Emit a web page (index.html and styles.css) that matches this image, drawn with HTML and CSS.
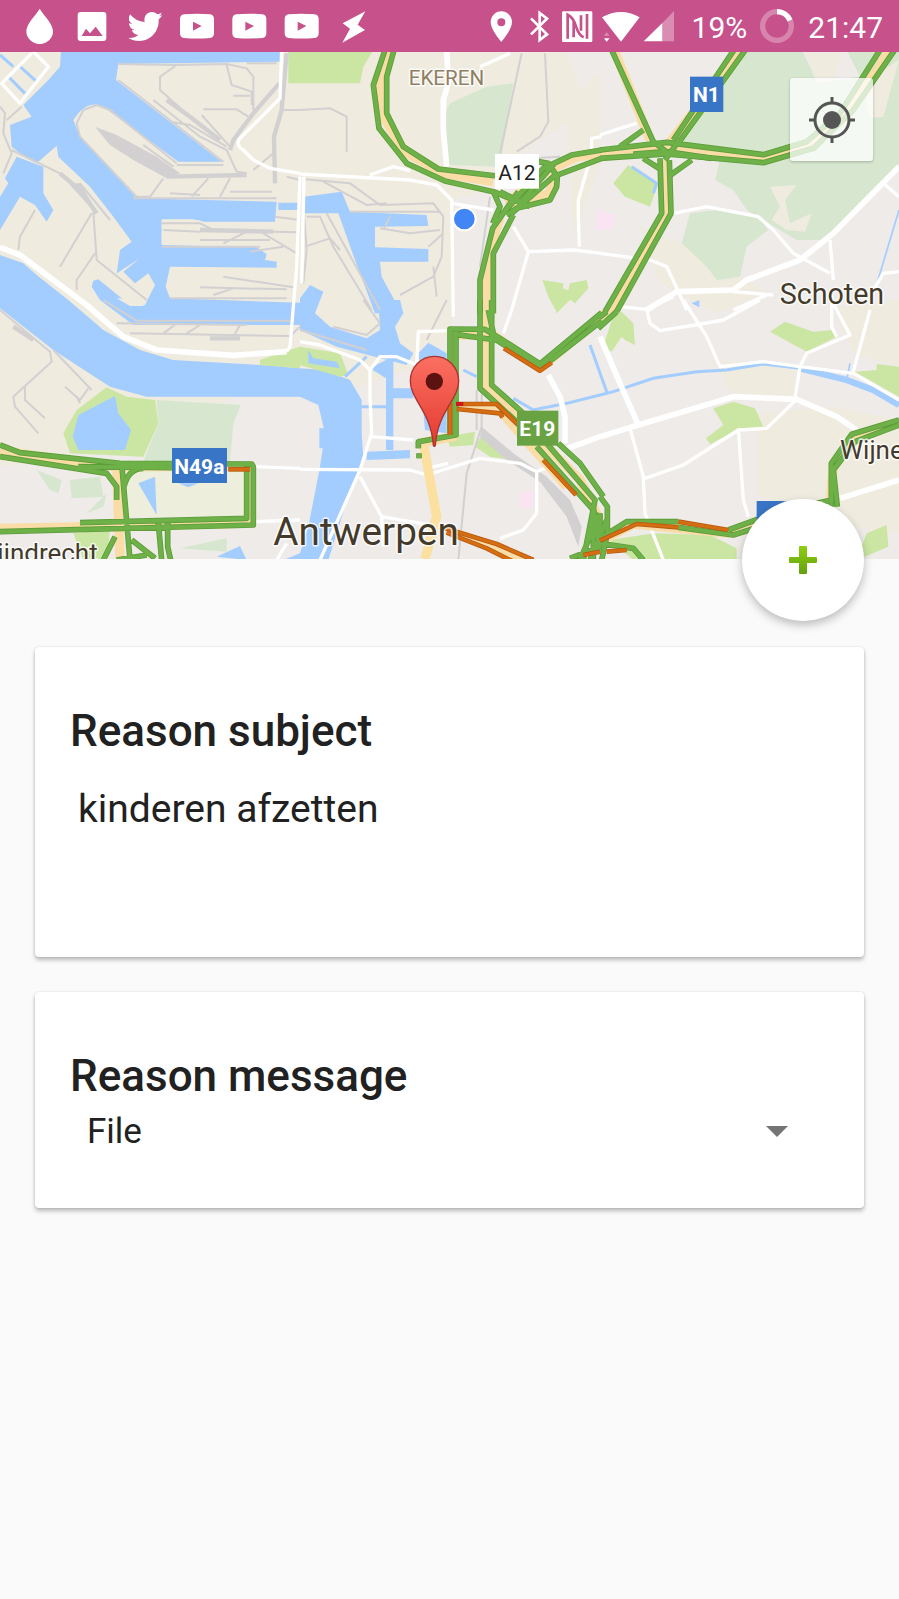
FILE: index.html
```html
<!DOCTYPE html>
<html lang="en">
<head>
<meta charset="utf-8">
<meta name="viewport" content="width=device-width, initial-scale=1">
<title>Reason</title>
<link rel="stylesheet" href="styles.css">
</head>
<body>
<header class="status">
  <div class="status-group">
    <svg class="cell-52" viewBox="42 0 156 156"><path d="M119 26C108 46 79 70 79 94a40 38 0 0 0 80 0C159 70 130 46 119 26Z"/></svg>
    <svg class="cell-52" viewBox="198 0 156 156"><path fill-rule="evenodd" d="M242 36H310a9 9 0 0 1 9 9V114a9 9 0 0 1-9 9H242a9 9 0 0 1-9-9V45a9 9 0 0 1 9-9ZM245 108H308L287 80 270 100 258 86Z"/></svg>
    <svg class="cell-52" viewBox="354 0 156 156"><path d="M487 46q-6 9-11 12c2 36-24 65-58 65-13 0-23-3-33-9q18 1 30-9-15-2-20-15 5 1 9 0-17-5-17-21 5 3 9 3-15-12-6-29 18 22 44 23c-4-18 8-30 22-30q9 0 16 7 7-1 13-5-2 7-8 11 5-1 10-3Z"/></svg>
    <svg class="cell-52" viewBox="510 0 156 156"><path fill-rule="evenodd" d="M552 43Q590 39 630 43 642 45 642 57V100Q642 112 630 114 590 117 552 114 540 112 540 100V57Q540 45 552 43ZM579 65V92L605 78Z"/></svg>
    <svg class="cell-52" viewBox="666 0 156 156"><path fill-rule="evenodd" d="M709 43Q747 39 787 43 799 45 799 57V100Q799 112 787 114 747 117 709 114 697 112 697 100V57Q697 45 709 43ZM736 65V92L762 78Z"/></svg>
    <svg class="cell-52" viewBox="822 0 156 156"><path fill-rule="evenodd" d="M866 43Q904 39 944 43 956 45 956 57V100Q956 112 944 114 904 117 866 114 854 112 854 100V57Q854 45 866 43ZM893 65V92L919 78Z"/></svg>
    <svg class="cell-52" viewBox="978 0 156 156"><path d="M1096 34 1028 70 1050 86 1027 128 1095 90 1073 74Z"/></svg>
  </div>
  <div class="status-group">
    <svg class="cell-40" viewBox="90 0 120 156"><path fill-rule="evenodd" d="M151 34a32 32 0 0 1 32 32C183 88 158 116 151 126 144 116 119 88 119 66A32 32 0 0 1 151 34ZM151 55a12 12 0 1 0 0 24 12 12 0 0 0 0-24Z"/></svg>
    <svg class="cell-36" viewBox="210 0 108 156"><path class="line" d="M240 55 288 103 266 120V39L288 56 240 103"/></svg>
    <svg class="cell-40" viewBox="318 0 120 156"><rect x="333" y="34" width="91" height="92" rx="4"/><path class="line bar" d="M350 116V44Q368 52 376 82 384 106 398 112M368 64V112M408 42V116M390 46V92"/></svg>
    <svg class="cell-44" viewBox="438 0 132 156"><path d="M453 52Q510 20 566 52L510 125Z"/><path d="M459 115H476L467 125Z"/><path class="dim" d="M459 107H476L467 97Z"/></svg>
    <svg class="cell-36" viewBox="570 0 108 156"><path class="dim" d="M669 33V124H634V69Z"/><path d="M634 69V124H578Z"/></svg>
    <span class="battery">19%</span>
    <svg class="ring" viewBox="927 27 102 102"><circle class="dim-line" cx="978" cy="78" r="43"/><path class="ring-line" d="M978 35A43 43 0 0 1 1017 61"/></svg>
    <time>21:47</time>
  </div>
</header>

<main>
<section class="map" aria-label="Map">
<svg class="map-art" viewBox="0 156 2697 1521" preserveAspectRatio="xMidYMid slice">
  <defs>
    <linearGradient id="pinfill" x1="0" y1="0" x2="0" y2="1"><stop offset="0" stop-color="#fb6f62"/><stop offset="1" stop-color="#e33b2e"/></linearGradient>
    <g id="green-roads">
      <g transform="translate(900 150)"><path d="M255 0 220 105 237 235 320 340 435 393 580 425 655 455M282 0 260 80V190L310 290 415 357 590 378M580 425 600 470 578 520M655 425 578 535 540 690V790M640 495 580 610V790M600 500 730 355 815 315 905 300M635 490 760 380 905 325M715 335 745 340 772 380 770 410 750 450 650 475 620 495M600 425 690 470M655 465 765 338"/></g>
      <g transform="translate(1800 150)"><path d="M0 300 200 277 490 314 620 275 720 190 840 0M0 325 200 312 490 338 640 295 760 180 884 0M35 0 160 275M402 0 220 270M436 0 238 275M180 325 185 490 15 785M208 330 213 490 50 785"/><path d="M60 290 130 240M160 275 205 310M130 325 185 360M205 380 275 330M235 275 195 330M100 312 200 305 335 325"/></g>
      <g transform="translate(0 900)"><path d="M0 435 60 458 360 490 755 492 760 500V675L0 695M0 470 320 520 350 560V600M235 500 520 503M740 500V655L240 668M365 490 390 780M372 560Q385 505 430 505M475 670 485 780M503 670V740L512 780M345 710 310 780M395 720 465 775M350 780 440 765"/></g>
      <g transform="translate(900 900)"><path d="M540 0V265L655 370M575 0V255L670 340M450 400V87L555 88 600 115 720 192 905 38M468 95V405L355 425V445M465 103 590 120 722 205 905 62M565 30 580 100M710 440 880 630V780M740 430 885 600 850 780M775 430 840 490 910 590M900 640 840 780M810 775 900 740M357 460V475M880 620 900 760M870 780 920 660"/></g>
      <g transform="translate(1800 900)"><path d="M-5 55 20 35M-5 85 50 35M0 715 80 665H235M235 682 400 705 480 680M385 690 480 655M694 620V490L755 403 897 360M712 620 700 510 765 425 897 375M650 610 695 600M0 590 22 620V700L5 780M0 730 100 745 130 780M0 640V700"/></g>
    </g>
    <g id="slow-roads">
      <g transform="translate(0 900)"><path d="M685 508H750"/></g>
      <g transform="translate(900 900)"><path d="M612 145 720 212 755 188M450 310V405M470 312 590 312 655 375M470 327 600 340 608 352M730 480 828 585M435 685 590 732 700 780M440 698 560 745 640 785M850 765 900 755"/></g>
      <g transform="translate(1800 900)"><path d="M235 665 385 690M0 722 110 672 235 682M20 755 80 750"/></g>
    </g>
  </defs>

  <rect class="port" y="156" width="2697" height="1521"/>
  <path class="city" d="M1355 600 1500 560 1560 370 1640 156H2697V1677H0V1400L400 1340 700 1190H1000L1300 1080 1355 980Z"/>
  <path class="port" d="M0 1170 250 1130 340 1200 190 1300 200 1350 0 1330ZM2270 1240 2500 1220 2697 1260V1600L2400 1560 2270 1480ZM2500 920 2697 900V1100L2560 1060ZM1350 156 1700 156 1760 330 1500 500 1345 500ZM1700 300 1800 220V500L1720 700ZM1920 680 2160 780 2300 880 2150 940 1980 850ZM2130 1080 2380 1100 2400 1190 2200 1180Z"/>

  <!-- parks and woodland -->
  <g transform="translate(0 150)"><path class="park" d="M865 0H1120L1090 50 1080 100H865Z"/></g>
  <g transform="translate(900 150)"><path class="wood" d="M450 160 560 110 640 100 600 350 445 345 435 190Z"/><path class="park" d="M727 690 790 700 785 760 765 778 745 740ZM810 700 860 690 865 715 825 760 800 740Z"/></g>
  <g transform="translate(1800 150)"><path class="wood" d="M425 0H605L635 60 650 100 780 80 740 0H897V340L690 570H590L440 480 400 420 345 390 360 330 240 270ZM270 490 350 480 480 505 505 540 440 590 420 680 350 690 320 650 245 580Z"/><path class="port" d="M510 410 590 405 555 450 570 520 635 490 615 545 560 540 515 510 540 470ZM897 30 850 200 810 205 790 100ZM620 10H720L700 90 650 90Z"/><path class="park" d="M85 345 175 400 150 470 75 440 40 400Z"/><path class="pink" d="M-10 480 45 495 35 540H-10Z"/></g>
  <g transform="translate(0 900)"><path class="park" d="M320 262 380 290 465 300 475 370 430 470 210 460 190 400 230 330ZM780 180 900 140V205L780 195ZM220 700 330 690 320 780H250Z"/><path class="wood" d="M470 300 722 315 700 370 690 485H430L475 370ZM210 540 300 530 310 590 215 595ZM110 510 185 540 175 580 150 570ZM260 640 320 580 310 620ZM540 745 680 715V755Z"/><path class="pale" d="M380 510H740V650H380Z"/></g>
  <g transform="translate(900 900)"><path class="park" d="M440 410 525 395 520 435 450 440ZM525 440 545 405 640 480 570 470ZM745 -50 830 -20 770 40Z"/><path class="pink" d="M655 580 700 568 698 620 665 628Z"/></g>
  <g transform="translate(1800 900)"><path class="park" d="M40 45 65 35 100 70 105 135 75 120 65 110 35 155 10 140ZM510 95 555 65 640 95 700 90 710 110 620 155ZM765 215 830 210V192L897 200V290ZM340 325 400 305 465 325 490 380 415 390 330 432 318 415 370 375ZM30 720 160 700 330 705 410 745V780H100ZM800 700 860 675 865 740 770 780Z"/><path class="water" d="M275 10 298 0V22Z"/></g>

  <!-- docks and river -->
  <g class="water">
    <path transform="translate(0 150)" d="M183 0H845V35L355 42 348 90 665 335H535L310 170Q270 150 235 190L220 210 240 260 410 445 830 455 825 515 610 515 595 510H485V585L770 592 800 612 795 630 830 635V653L510 650 497 710 510 745 900 758V825H400L300 750 275 710 280 692 295 688 390 765 435 765 465 705 445 670 405 700 370 665 418 626 350 670 360 600 395 575 340 500 270 410 175 320 170 287 110 340 80 325 35 290 30 225 95 200 70 165 145 90 180 50ZM50 320 130 350V430L160 480 140 515 105 465 60 440 0 540V440L25 400 15 385ZM835 458H900V480H835Z"/>
    <path transform="translate(900 150)" d="M12 440 125 425 150 485 380 495 385 528 225 530V592L385 597V635H240L245 680 305 790H225L165 630 115 490H12ZM0 745 30 705 70 725 45 790 90 830 200 865 240 840 235 750H300L310 790 285 830 300 880 340 910 320 945 110 890 0 840Z"/>
    <path transform="translate(0 900)" d="M0-135 70-110 110-75 205 0 310 90 420 150 520 180 780 195 900 205 970 210 1050 240 1085 300V400L1090 480 1035 620 985 780H850L900 760 925 680 960 500 975 400 955 315 900 290H440L330 260 160 150 0 25ZM650 770 720 738 740 780ZM235 345 345 288 355 340 393 390 375 450H235L218 410ZM415 550 465 530 470 645ZM535 550H595L565 562Z"/>
    <path transform="translate(900 900)" d="M355 160 385 128 440 160V400L375 390ZM258 180H280V265H340V295H280V450H258V235L210 205ZM200 455 330 450V475L200 480ZM58 385H80V445H58Z"/>
  </g>
  <path class="port" d="M485 658H580L610 668 900 666V732H485V696H530V687H485Z"/>
  <path class="park" d="M900 1040 1020 1060 1045 1125 1020 1130 900 1095ZM780 1080 900 1040V1105L780 1095Z"/>
  <path class="water" d="M925 1050 940 1075 1010 1085 1020 1105 925 1090Z"/>
  <path class="port" d="M350 895 440 900 430 918 390 918Z"/>
  <g class="canal">
    <path d="M1700 1210 1800 1185 1840 1175 1960 1135 2090 1115 2180 1110 2290 1092 2400 1105M1770 1035 1820 1175M1540 1195 1600 1230 1700 1210M1390 1110 1430 1130M1035 1130 1100 1070M1080 1220H1160M55 195 110 245M25 230 75 280M0 165 40 200M1895 500 1970 550 1960 580"/>
    <path class="canal-thin" d="M2697 630 2628 860M2550 1090 2540 1140"/>
    <path class="canal-wide" d="M2400 1105 2540 1140 2620 1170 2697 1215"/>
  </g>

  <!-- rail lines -->
  <g class="rail">
    <path transform="translate(0 150)" d="M355 42 520 45 680 42 740 55 760 80V180M830 40 740 40M530 45 480 80V120L570 200M680 45 695 105 755 125V165M700 137H750M610 178H710L745 200M460 150 600 260 680 300 710 365 740 370M510 215 570 225 680 290M605 195 690 290M240 260 230 220 250 180 290 165 330 180 530 340M490 385 450 440H410L240 260M510 430 600 435M575 440 625 385M660 440 690 385M690 425H815M485 520 600 520 640 540 890 547M530 345H670M490 540 600 545M600 570H810M670 580 740 545M790 550 890 610M510 745H860M670 680 880 712M600 712 860 718M640 735 700 715M0 170 15 190 10 250 35 310 10 370M20 210 65 170M35 300 180 370M240 400 330 510M280 485 290 630 440 750M275 490 180 650M105 480 60 560 55 600M285 610 230 690V720M400 445H830M355 90 670 335M750 605 850 590M760 360 820 310M430 285 520 350M850 180H900M825 500 900 510M485 590H780M860 380 900 390"/>
    <path class="rail-wide" transform="translate(0 150)" d="M838 100 760 190 700 270 690 300M860 10 845 180 822 260 825 400M500 150 570 200 660 270M180 370 240 420 290 490M500 380 740 375M600 540 820 545"/>
    <path class="rail-fill" transform="translate(0 150)" d="M285 230 350 255 470 320 540 370 500 385 400 330 330 285ZM205 400 240 400 295 490 260 460Z"/>
    <path transform="translate(900 150)" d="M0 180 90 175 140 200V305M665 10 600 310M735 10 745 215 720 260 650 305M700 325 780 320M570 440 540 650M12 388 150 400 240 465 400 460 430 500 425 620 400 680 300 735M70 395 200 465 260 460M20 500 60 500 100 590 215 780M15 590 90 565 120 600M12 490 20 600 10 700M240 535 330 550 420 540M400 650 410 740M385 590 430 550M150 485H420M270 500 250 540M80 490 240 780"/>
    <path transform="translate(0 900)" d="M0 30 150 155 155 185 40 290 45 320 115 400M75 260V300L135 355M160 150 275 270M195 260 240 300 265 265M230 290 240 310M350 70 740 75M390 100 870 108 900 80M490 100 530 70M560 100 600 75M700 110 720 75M310 0 410 62H880"/>
    <path class="rail-wide" transform="translate(0 900)" d="M40 80 100 120M630 115 720 115"/>
    <path transform="translate(900 900)" d="M545 270V380L500 520 475 780M440 0 380 120M190 0 240 70 200 105 100 80M0 90 200 150M530 270V390"/>
    <path class="rail-fill" transform="translate(900 900)" d="M545 380 640 460 740 530 810 600 845 680 835 740 800 650 720 545 620 480 540 410Z"/>
  </g>

  <!-- streets -->
  <g class="street">
    <path transform="translate(0 150)" d="M845 0 840 145 720 265Q705 285 730 300L760 330 810 355 900 370M95 0 145 50 60 160 5 100 95 10M900 380 890 650 870 890 860 905"/>
    <path transform="translate(900 150)" d="M0 372 330 390 410 405 455 450 460 800M210 375 280 350 330 362M540 50 630 10M455 460 580 480M640 530 685 605 820 600 905 610M685 605 635 780 610 850M905 260 875 265V310L835 450V500L838 590M12 380 5 700"/>
    <path transform="translate(1800 150)" d="M0 255 60 235 110 220M220 490 320 470 475 500 520 540 580 610 690 670M0 610 150 630 200 650 235 725 260 780M400 725 520 735M690 570 700 690M850 400 897 440M897 665 850 670 820 720M400 780 500 735"/>
    <path transform="translate(0 900)" d="M765 500 900 505M765 665 900 660M830 780 860 730"/>
    <path transform="translate(900 900)" d="M0 125 60 135 180 180 210 210V290L215 400 180 510 60 780M210 210 240 170 290 170 350 195 355 95 450 92M0 508 330 510 380 525 540 475 660 490 710 515 745 500M710 515V640L670 690 600 715M180 530 245 650 420 680M215 410 340 420M380 505 445 490M245 650 250 740"/>
    <path transform="translate(1800 900)" d="M60 20 140 28 220-10M140 28 150 70 180 92 285 75 370 60 480 0M250 0 320 110 360 200 490 185 600 200 760 220 897 300M600 200 585 295M600 200 620 160 750 105 705 20 695-10V80L710 110M760 215 810 30M590 298 500 385 415 390 250 495 135 535M415 385 430 600 445 650M90 385 130 530 135 640 190 780"/>
    <path class="street-wide" d="M0 742 60 765 260 915 370 1010 470 1050 700 1066 860 1055M1340 150 1345 250 1330 300V390L1340 500M2697 500 2500 700 2400 780 2240 840 2200 870 2030 875 1940 930M1800 1010 1860 1150 1915 1275M1690 1350 1800 1310 1915 1275 2200 1190 2390 1198 2510 1250 2570 1290M1645 1125 1680 1190 1695 1250V1330M2520 1495 2697 1440"/>
  </g>

  <!-- motorways -->
  <g class="motorway">
    <path d="M1168 156 1140 250 1150 350 1215 455 1330 520 1480 545M1500 650 1475 730 1458 850V1160L1580 1280 1740 1440 1800 1560M1520 610 1640 515 1730 470 1800 462 2000 445 2285 475 2420 440 2540 350 2665 156M1520 620 1650 580 1660 530M1845 156 1950 420M2220 156 2000 440M1995 480 2005 640 1840 920 1620 1105 1480 1005H1360V1310L1255 1330M0 1352 340 1400H750V1570L0 1585M350 1400 360 1677M1370 1220H1490L1700 1460M1340 1590 1480 1640 1580 1690M1800 1625 1900 1572 2190 1600 2290 1575M2490 1510 2500 1400 2570 1310 2697 1268"/>
    <path class="motorway-thick" d="M1272 1340 1310 1550 1275 1677"/>
  </g>
  <use href="#green-roads" class="green-edge"/>
  <use href="#green-roads" class="green-core"/>
  <use href="#slow-roads" class="slow-edge"/>
  <use href="#slow-roads" class="slow-core"/>
  <path class="jam" d="M1368 1212H1390"/>

  <!-- place names and road shields -->
  <g class="place">
    <text class="suburb" x="1226" y="255">EKEREN</text>
    <text class="town" x="2339" y="913">Schoten</text>
    <text class="village" x="2520" y="1376">Wijne</text>
    <text class="village" x="-8" y="1685">ijndrecht</text>
    <text class="metro" x="820" y="1635">Antwerpen</text>
  </g>
  <g class="shield">
    <rect class="plain" x="1485" y="462" width="132" height="104"/><text class="plain-text" x="1551" y="540">A12</text>
    <rect class="national" x="2070" y="230" width="100" height="106"/><text x="2119" y="306">N1</text>
    <rect class="national" x="516" y="1344" width="165" height="105"/><text x="598" y="1422">N49a</text>
    <rect class="euro" x="1551" y="1232" width="124" height="105"/><text x="1612" y="1309">E19</text>
    <rect class="national" x="2270" y="1503" width="120" height="105"/>
  </g>
  <circle class="here" cx="1393" cy="657" r="34"/>
  <path class="pin" d="M1303 1069a72 74 0 0 1 73 74C1376 1200 1312 1235 1306 1336Q1303 1342 1300 1336C1294 1235 1231 1200 1231 1143A72 74 0 0 1 1303 1069Z"/>
  <circle class="pin-dot" cx="1303" cy="1144" r="26"/>
</svg>
<button class="locate" type="button" aria-label="My location">
  <svg viewBox="0 0 48 48"><circle cx="24" cy="24" r="17"/><path d="M24 1V8M24 40V47M1 24H8M40 24H47"/><circle class="solid" cx="24" cy="24" r="9"/></svg>
</button>
<button class="add" type="button" aria-label="Add">
  <svg viewBox="0 0 30 30"><defs><linearGradient id="plus" x1="0" y1="0" x2="0" y2="1"><stop offset="0" stop-color="#8fce10"/><stop offset="1" stop-color="#62a010"/></linearGradient></defs><path fill="url(#plus)" d="M12 1H18Q19 1 19 2V12H28Q29 12 29 13V17Q29 18 28 18H19V28Q19 29 18 29H12Q11 29 11 28V18H2Q1 18 1 17V13Q1 12 2 12H11V2Q11 1 12 1Z"/></svg>
</button>
</section>

<form class="cards">
  <div class="card card-tall">
    <label class="card-title" for="subject">Reason subject</label>
    <input class="subject" id="subject" type="text" value="kinderen afzetten">
  </div>
  <div class="card">
    <label class="card-title" for="message">Reason message</label>
    <div class="picker">
      <select id="message"><option>File</option></select>
      <svg class="caret" viewBox="0 0 22 11"><path d="M0 0H22L11 11Z"/></svg>
    </div>
  </div>
</form>
</main>
</body>
</html>
```
FILE: styles.css
```css
* { box-sizing: border-box; }
body {
  margin: 0;
  min-height: 100vh;
  background: #fafafa;
  color: #212121;
  font-family: Roboto, "Liberation Sans", sans-serif;
}
button, input, select { font: inherit; color: inherit; border: 0; margin: 0; padding: 0; }

/* status bar */
.status {
  display: flex;
  justify-content: space-between;
  height: 52px;
  padding: 0 16px 0 14px;
  background: #c6518b;
  color: #fff;
  font-size: 30px;
  line-height: 56px;
}
.status-group { display: flex; }
.status svg { flex: none; height: 52px; fill: #fff; }
.cell-52 { width: 52px; }
.cell-44 { width: 44px; }
.cell-40 { width: 40px; }
.cell-36 { width: 36px; }
.status .line { fill: none; stroke: #fff; stroke-width: 8; }
.status .bar { stroke: #c6518b; }
.status .dim { opacity: 0.35; }
.battery { margin: 0 13px 0 15px; }
.status .ring { width: 34px; height: 34px; margin: 9px 14px 0 0; }
.status .dim-line, .status .ring-line { fill: none; stroke: #fff; stroke-width: 16; }
.dim-line { opacity: 0.3; }

/* map */
.map { position: relative; height: 507px; }
.map-art { display: block; width: 100%; height: 100%; }
.port { fill: #efebdf; }
.city { fill: #eeebe8; }
.pale { fill: #eeeedd; }
.park { fill: #cbe6a3; }
.wood { fill: #d7e7cf; }
.pink { fill: #fbe4f1; }
.water { fill: #a3ccff; }
.canal { fill: none; stroke: #a3ccff; stroke-width: 9; }
.canal-thin { stroke-width: 5; }
.canal-wide { stroke-width: 19; }
.rail { fill: none; stroke: #d2d0d1; stroke-width: 6; }
.rail-wide { stroke-width: 13; }
.rail-fill { fill: #d2d0d1; stroke: none; }
.street { fill: none; stroke: #fff; stroke-width: 10; stroke-linejoin: round; }
.street-wide { stroke-width: 17; }
.motorway { fill: none; stroke: #fadca6; stroke-width: 28; stroke-linejoin: round; }
.motorway-thick { stroke: #fbe0a0; stroke-width: 28; }
.green-edge, .green-core, .slow-edge, .slow-core { fill: none; stroke-linejoin: round; }
.green-edge { stroke: #5c9c38; stroke-width: 17; }
.green-core { stroke: #6fb149; stroke-width: 12; }
.slow-edge { stroke: #b85a10; stroke-width: 14; }
.slow-core { stroke: #d56d12; stroke-width: 9; }
.jam { stroke: #d01818; stroke-width: 12; }
.place { fill: #433a2b; stroke: #fff; stroke-opacity: 0.8; stroke-width: 9; stroke-linejoin: round; paint-order: stroke; }
.suburb { font-size: 62px; fill: #8f8062; }
.village { font-size: 78px; }
.town { font-size: 86px; }
.metro { font-size: 116px; }
.shield { fill: #fff; font-size: 63px; font-weight: 700; text-anchor: middle; }
.plain-text { fill: #222; font-weight: 400; }
.national { fill: #3975c6; }
.euro { fill: #69a242; }
.here { fill: #4285f4; stroke: #fff; stroke-width: 6; }
.pin { fill: url(#pinfill); stroke: #a8342d; stroke-width: 4; }
.pin-dot { fill: #5c1210; }

.locate {
  position: absolute;
  top: 26px;
  right: 26px;
  display: grid;
  place-items: center;
  width: 83px;
  height: 83px;
  border-radius: 3px;
  background: rgba(255, 255, 255, 0.75);
  box-shadow: 0 1px 3px rgba(0, 0, 0, 0.25);
}
.locate svg { width: 48px; height: 48px; fill: none; stroke: #555; stroke-width: 3; }
.locate .solid { fill: #555; stroke: none; }
.add {
  position: absolute;
  right: 35px;
  bottom: -62px;
  display: grid;
  place-items: center;
  width: 122px;
  height: 122px;
  border-radius: 50%;
  background: #fff;
  box-shadow: 0 4px 10px rgba(0, 0, 0, 0.25);
}
.add svg { width: 30px; height: 30px; }

/* cards */
.cards { display: grid; gap: 35px; padding: 88px 35px; }
.card {
  display: flex;
  flex-direction: column;
  min-height: 216px;
  padding: 56px 35px 24px;
  border-radius: 4px;
  background: #fff;
  box-shadow: 0 3px 4px rgba(0, 0, 0, 0.26), 0 0 2px rgba(0, 0, 0, 0.14);
}
.card-tall { min-height: 310px; }
.card-title { font-size: 44px; font-weight: 500; line-height: 56px; }
.subject { width: 100%; height: 56px; margin-top: 22px; padding-left: 8px; background: none; font-size: 39px; }
.picker { display: flex; align-items: center; padding-right: 41px; }
.picker select { flex: 1; height: 54px; padding-left: 17px; appearance: none; background: none; font-size: 35px; }
.caret { flex: none; width: 22px; height: 11px; fill: #757575; }
```
